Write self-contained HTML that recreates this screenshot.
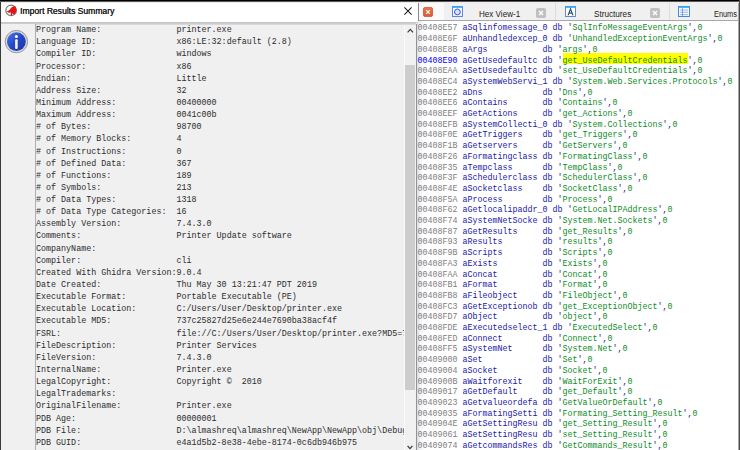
<!DOCTYPE html>
<html><head><meta charset="utf-8"><style>
*{margin:0;padding:0;box-sizing:border-box}
html,body{width:740px;height:450px;overflow:hidden;background:#fff}
body{position:relative;font-family:"Liberation Sans",sans-serif}
.a{position:absolute}
.lt{position:absolute;left:0;white-space:pre;font-family:"Liberation Mono",monospace;font-size:8.37px;line-height:12px;color:#2c2c2c;height:12px}
.rt{position:absolute;left:0;white-space:pre;font-family:"Liberation Mono",monospace;font-size:8.333px;line-height:11px;height:11px}
.ad{color:#808080}.lb{color:#2020a8}.st{color:#0c8c1e}.hl{background:#ffff00}
</style></head><body>

<div class="a" style="left:0;top:0;width:740px;height:1px;background:#000"></div>
<div class="a" style="left:0;top:2px;width:418px;height:448px;background:#f0f0f0"></div>
<div class="a" style="left:0;top:2px;width:1px;height:448px;background:#3a3a3a"></div>
<div class="a" style="left:1px;top:2px;width:417px;height:20px;background:#fff"></div>
<svg class="a" style="left:4px;top:4px" width="15" height="15" viewBox="0 0 15 15">
<circle cx="7.1" cy="6.4" r="5.3" fill="#fff" stroke="#7a7a7a" stroke-width="1.2"/>
<path d="M2.8 7.6 L5.2 6.2 L7.4 3.6 L9.6 2.2 L11.4 2.6 L12.3 5 L12.2 7.6 L11 9.8 L9.6 10.4 L8.6 9.2 L7.8 11.4 L6.6 11 L7 8.6 L4.6 8.8 Z" fill="#e41414"/>
</svg>
<div class="a" style="left:20px;top:3.5px;font-size:9px;color:#1a1a1a;text-shadow:0.25px 0 0 #1a1a1a;white-space:pre;line-height:14px;transform:scaleX(0.952);transform-origin:0 0">Import Results Summary</div>
<svg class="a" style="left:403.5px;top:6.5px" width="8" height="8" viewBox="0 0 8 8"><path d="M0.4 0.4 L7.6 7.6 M7.6 0.4 L0.4 7.6" stroke="#1e1e1e" stroke-width="1.05"/></svg>
<svg class="a" style="left:4px;top:29px" width="25" height="25" viewBox="0 0 25 25">
<defs><linearGradient id="ig" x1="0" y1="0" x2="1" y2="1"><stop offset="0" stop-color="#4f78e8"/><stop offset="0.5" stop-color="#2447c8"/><stop offset="1" stop-color="#1a35a8"/></linearGradient></defs>
<circle cx="12.4" cy="12.6" r="11.2" fill="#d8d8d8" stroke="#9a9a9a" stroke-width="1"/>
<circle cx="12.4" cy="12.6" r="9.4" fill="url(#ig)"/>
<circle cx="12.4" cy="7.4" r="1.5" fill="#fff"/>
<rect x="11.1" y="10.3" width="2.6" height="9.6" rx="1" fill="#f2f2f2"/>
</svg>
<div class="a" style="left:1px;top:22px;width:416px;height:1px;background:#c6c6c6"></div>
<div class="a" style="left:1px;top:23px;width:415px;height:1px;background:#cbccce"></div>
<div class="a" style="left:35px;top:24px;width:381px;height:1px;background:#d8d9dc"></div>
<div class="a" style="left:35px;top:24px;width:1px;height:426px;background:#adb0b4"></div>
<div class="a" style="left:36px;top:25px;width:368px;height:425px;overflow:hidden">
<div class="lt" style="top:-0.90px;left:0.00px">Program Name:               printer.exe</div>
<div class="lt" style="top:11.24px;left:0.00px">Language ID:                x86:LE:32:default (2.8)</div>
<div class="lt" style="top:23.38px;left:0.00px">Compiler ID:                windows</div>
<div class="lt" style="top:35.52px;left:0.00px">Processor:                  x86</div>
<div class="lt" style="top:47.66px;left:0.00px">Endian:                     Little</div>
<div class="lt" style="top:59.80px;left:0.00px">Address Size:               32</div>
<div class="lt" style="top:71.94px;left:0.00px">Minimum Address:            00400000</div>
<div class="lt" style="top:84.08px;left:0.00px">Maximum Address:            0041c00b</div>
<div class="lt" style="top:96.22px;left:0.00px"># of Bytes:                 98700</div>
<div class="lt" style="top:108.36px;left:0.00px"># of Memory Blocks:         4</div>
<div class="lt" style="top:120.50px;left:0.00px"># of Instructions:          0</div>
<div class="lt" style="top:132.64px;left:0.00px"># of Defined Data:          367</div>
<div class="lt" style="top:144.78px;left:0.00px"># of Functions:             189</div>
<div class="lt" style="top:156.92px;left:0.00px"># of Symbols:               213</div>
<div class="lt" style="top:169.06px;left:0.00px"># of Data Types:            1318</div>
<div class="lt" style="top:181.20px;left:0.00px"># of Data Type Categories:  16</div>
<div class="lt" style="top:193.34px;left:0.00px">Assembly Version:           7.4.3.0</div>
<div class="lt" style="top:205.48px;left:0.00px">Comments:                   Printer Update software</div>
<div class="lt" style="top:217.62px;left:0.00px">CompanyName:                </div>
<div class="lt" style="top:229.76px;left:0.00px">Compiler:                   cli</div>
<div class="lt" style="top:241.90px;left:0.00px">Created With Ghidra Version:9.0.4</div>
<div class="lt" style="top:254.04px;left:0.00px">Date Created:               Thu May 30 13:21:47 PDT 2019</div>
<div class="lt" style="top:266.18px;left:0.00px">Executable Format:          Portable Executable (PE)</div>
<div class="lt" style="top:278.32px;left:0.00px">Executable Location:        C:/Users/User/Desktop/printer.exe</div>
<div class="lt" style="top:290.46px;left:0.00px">Executable MD5:             737c25827d25e6e244e7690ba38acf4f</div>
<div class="lt" style="top:302.60px;left:0.00px">FSRL:                       file://C:/Users/User/Desktop/printer.exe?MD5=737c25827d25e6e244e7690ba38acf4f</div>
<div class="lt" style="top:314.74px;left:0.00px">FileDescription:            Printer Services</div>
<div class="lt" style="top:326.88px;left:0.00px">FileVersion:                7.4.3.0</div>
<div class="lt" style="top:339.02px;left:0.00px">InternalName:               Printer.exe</div>
<div class="lt" style="top:351.16px;left:0.00px">LegalCopyright:             Copyright ©  2010</div>
<div class="lt" style="top:363.30px;left:0.00px">LegalTrademarks:            </div>
<div class="lt" style="top:375.44px;left:0.00px">OriginalFilename:           Printer.exe</div>
<div class="lt" style="top:387.58px;left:0.00px">PDB Age:                    00000001</div>
<div class="lt" style="top:399.72px;left:0.00px">PDB File:                   D:\almashreq\almashreq\NewApp\NewApp\obj\Debug\Printer.pdb</div>
<div class="lt" style="top:411.86px;left:0.00px">PDB GUID:                   e4a1d5b2-8e38-4ebe-8174-0c6db946b975</div>
</div>
<div class="a" style="left:405px;top:25px;width:11px;height:425px;background:#f1f1f1"></div>
<div class="a" style="left:404px;top:25px;width:1px;height:425px;background:#fafafa"></div>
<div class="a" style="left:405px;top:65px;width:10px;height:325px;background:#cdcdcd"></div>
<svg class="a" style="left:407px;top:28px" width="7" height="5" viewBox="0 0 7 5"><path d="M0.6 4.3 L3.3 1.4 L6 4.3" stroke="#3a3a3a" stroke-width="1.2" fill="none"/></svg>
<svg class="a" style="left:407px;top:445px" width="7" height="5" viewBox="0 0 7 5"><path d="M0.6 0.9 L3.0 3.6 L5.4 0.9" stroke="#3a3a3a" stroke-width="1.3" fill="none"/></svg>
<div class="a" style="left:416px;top:24px;width:1px;height:426px;background:#8a949e"></div>
<div class="a" style="left:417px;top:2px;width:323px;height:448px;background:#fff"></div>
<div class="a" style="left:418px;top:2px;width:322px;height:19px;background:#f0f0f0"></div>
<div class="a" style="left:418px;top:3px;width:26px;height:17px;background:#fafafa"></div>
<div class="a" style="left:418px;top:2px;width:321px;height:1px;background:#e4e4e4"></div>
<div class="a" style="left:418px;top:20px;width:320px;height:1px;background:#a8a8a8"></div>
<div class="a" style="left:418px;top:2px;width:1px;height:19px;background:#8a8a8a"></div>
<div class="a" style="left:417px;top:21px;width:8px;height:429px;background:linear-gradient(90deg,#dcdcdc,#f4f4f4 40%,#fff)"></div>
<div class="a" style="left:738px;top:2px;width:1px;height:448px;background:#a8a8a8"></div>
<div class="a" style="left:739px;top:0;width:1px;height:450px;background:#4a4a4a"></div>
<svg class="a" style="left:423px;top:7px" width="10" height="10" viewBox="0 0 10 10"><defs><linearGradient id="og" x1="0" y1="0" x2="0" y2="1"><stop offset="0" stop-color="#e8784e"/><stop offset="1" stop-color="#dc5a34"/></linearGradient></defs><rect x="0.4" y="0.4" width="9.2" height="9.2" rx="1.8" fill="url(#og)" stroke="#d44a2a" stroke-width="0.8"/><path d="M3.2 3.2 L6.8 6.8 M6.8 3.2 L3.2 6.8" stroke="#fff" stroke-width="1.2"/></svg>
<svg class="a" style="left:452px;top:6px" width="11" height="11" viewBox="0 0 11 11"><defs><linearGradient id="hg" x1="0" y1="0" x2="0" y2="1"><stop offset="0" stop-color="#fff"/><stop offset="1" stop-color="#e8f0ff"/></linearGradient></defs><rect x="0.5" y="0.5" width="10" height="10" fill="url(#hg)" stroke="#4a7ee0" stroke-width="0.9"/><rect x="0.5" y="0.4" width="10" height="1.5" fill="#38b0f0"/><circle cx="5.4" cy="5.9" r="2.9" fill="#d8e4ff" stroke="#3a50f0" stroke-width="1"/></svg>
<div class="a" style="left:479px;top:7px;font-size:8.4px;color:#1a1a1a;white-space:pre;line-height:14px;transform:scaleX(0.965);transform-origin:0 0">Hex View-1</div>
<svg class="a" style="left:536px;top:8px" width="10" height="10" viewBox="0 0 10 10"><rect x="0" y="0" width="10" height="10" rx="1.8" fill="#c0c0c0"/><path d="M3 3 L7 7 M7 3 L3 7" stroke="#fff" stroke-width="1.4"/></svg>
<div class="a" style="left:555px;top:3px;width:1px;height:17px;background:#dcdcdc"></div>
<svg class="a" style="left:565px;top:6px" width="11" height="11" viewBox="0 0 11 11"><rect x="0.5" y="0.5" width="10" height="10" fill="#fff" stroke="#4a7ee0" stroke-width="0.9"/><rect x="0.5" y="0.4" width="10" height="1.5" fill="#38b0f0"/><path d="M3 9.4 L5.5 3 L8 9.4 M3.9 7.2 L7.1 7.2" fill="none" stroke="#30507a" stroke-width="1.2"/></svg>
<div class="a" style="left:594px;top:7px;font-size:8.4px;color:#1a1a1a;white-space:pre;line-height:14px;transform:scaleX(0.975);transform-origin:0 0">Structures</div>
<svg class="a" style="left:650px;top:8px" width="10" height="10" viewBox="0 0 10 10"><rect x="0" y="0" width="10" height="10" rx="1.8" fill="#c0c0c0"/><path d="M3 3 L7 7 M7 3 L3 7" stroke="#fff" stroke-width="1.4"/></svg>
<div class="a" style="left:669px;top:3px;width:1px;height:17px;background:#dcdcdc"></div>
<svg class="a" style="left:678px;top:6px" width="12" height="11" viewBox="0 0 12 11"><rect x="0.5" y="0.5" width="11" height="10" fill="#f4faff" stroke="#3a78e0" stroke-width="0.9"/><rect x="0.5" y="0.4" width="11" height="1.5" fill="#38b0f0"/><path d="M2 4 L10 4 M2 6.3 L10 6.3 M2 8.6 L10 8.6" stroke="#7aa8f0" stroke-width="0.8"/><path d="M4.5 2.5 L4.5 10" stroke="#2a5ad0" stroke-width="1" stroke-dasharray="1 1"/></svg>
<div class="a" style="left:714px;top:7px;font-size:8.4px;color:#1a1a1a;white-space:pre;line-height:14px;transform:scaleX(0.88);transform-origin:0 0">Enums</div>
<div class="a" style="left:562.7px;top:53.4px;width:125.3px;height:10.7px;background:#ffff00"></div>
<div class="a" style="left:417px;top:21px;width:321px;height:429px;overflow:hidden">
<div class="rt" style="top:2.40px;left:0.60px"><span class="ad">00408E57</span> <span class="lb">aSqlinfomessage_0 db '</span><span class="st">SqlInfoMessageEventArgs</span><span class="lb">',</span><span class="st">0</span></div>
<div class="rt" style="top:13.10px;left:0.60px"><span class="ad">00408E6F</span> <span class="lb">aUnhandledexcep_0 db '</span><span class="st">UnhandledExceptionEventArgs</span><span class="lb">',</span><span class="st">0</span></div>
<div class="rt" style="top:23.80px;left:0.60px"><span class="ad">00408E8B</span> <span class="lb">aArgs           db '</span><span class="st">args</span><span class="lb">',</span><span class="st">0</span></div>
<div class="rt" style="top:34.50px;left:0.60px"><span class="ad" style="color:#0000ff">00408E90</span> <span class="lb">aGetUsedefaultc db '</span><span class="st">get_UseDefaultCredentials</span><span class="lb">',</span><span class="st">0</span></div>
<div class="rt" style="top:45.20px;left:0.60px"><span class="ad">00408EAA</span> <span class="lb">aSetUsedefaultc db '</span><span class="st">set_UseDefaultCredentials</span><span class="lb">',</span><span class="st">0</span></div>
<div class="rt" style="top:55.90px;left:0.60px"><span class="ad">00408EC4</span> <span class="lb">aSystemWebServi_1 db '</span><span class="st">System.Web.Services.Protocols</span><span class="lb">',</span><span class="st">0</span></div>
<div class="rt" style="top:66.60px;left:0.60px"><span class="ad">00408EE2</span> <span class="lb">aDns            db '</span><span class="st">Dns</span><span class="lb">',</span><span class="st">0</span></div>
<div class="rt" style="top:77.30px;left:0.60px"><span class="ad">00408EE6</span> <span class="lb">aContains       db '</span><span class="st">Contains</span><span class="lb">',</span><span class="st">0</span></div>
<div class="rt" style="top:88.00px;left:0.60px"><span class="ad">00408EEF</span> <span class="lb">aGetActions     db '</span><span class="st">get_Actions</span><span class="lb">',</span><span class="st">0</span></div>
<div class="rt" style="top:98.70px;left:0.60px"><span class="ad">00408EFB</span> <span class="lb">aSystemCollecti_0 db '</span><span class="st">System.Collections</span><span class="lb">',</span><span class="st">0</span></div>
<div class="rt" style="top:109.40px;left:0.60px"><span class="ad">00408F0E</span> <span class="lb">aGetTriggers    db '</span><span class="st">get_Triggers</span><span class="lb">',</span><span class="st">0</span></div>
<div class="rt" style="top:120.10px;left:0.60px"><span class="ad">00408F1B</span> <span class="lb">aGetservers     db '</span><span class="st">GetServers</span><span class="lb">',</span><span class="st">0</span></div>
<div class="rt" style="top:130.80px;left:0.60px"><span class="ad">00408F26</span> <span class="lb">aFormatingclass db '</span><span class="st">FormatingClass</span><span class="lb">',</span><span class="st">0</span></div>
<div class="rt" style="top:141.50px;left:0.60px"><span class="ad">00408F35</span> <span class="lb">aTempclass      db '</span><span class="st">TempClass</span><span class="lb">',</span><span class="st">0</span></div>
<div class="rt" style="top:152.20px;left:0.60px"><span class="ad">00408F3F</span> <span class="lb">aSchedulerclass db '</span><span class="st">SchedulerClass</span><span class="lb">',</span><span class="st">0</span></div>
<div class="rt" style="top:162.90px;left:0.60px"><span class="ad">00408F4E</span> <span class="lb">aSocketclass    db '</span><span class="st">SocketClass</span><span class="lb">',</span><span class="st">0</span></div>
<div class="rt" style="top:173.60px;left:0.60px"><span class="ad">00408F5A</span> <span class="lb">aProcess        db '</span><span class="st">Process</span><span class="lb">',</span><span class="st">0</span></div>
<div class="rt" style="top:184.30px;left:0.60px"><span class="ad">00408F62</span> <span class="lb">aGetlocalipaddr_0 db '</span><span class="st">GetLocalIPAddress</span><span class="lb">',</span><span class="st">0</span></div>
<div class="rt" style="top:195.00px;left:0.60px"><span class="ad">00408F74</span> <span class="lb">aSystemNetSocke db '</span><span class="st">System.Net.Sockets</span><span class="lb">',</span><span class="st">0</span></div>
<div class="rt" style="top:205.70px;left:0.60px"><span class="ad">00408F87</span> <span class="lb">aGetResults     db '</span><span class="st">get_Results</span><span class="lb">',</span><span class="st">0</span></div>
<div class="rt" style="top:216.40px;left:0.60px"><span class="ad">00408F93</span> <span class="lb">aResults        db '</span><span class="st">results</span><span class="lb">',</span><span class="st">0</span></div>
<div class="rt" style="top:227.10px;left:0.60px"><span class="ad">00408F9B</span> <span class="lb">aScripts        db '</span><span class="st">Scripts</span><span class="lb">',</span><span class="st">0</span></div>
<div class="rt" style="top:237.80px;left:0.60px"><span class="ad">00408FA3</span> <span class="lb">aExists         db '</span><span class="st">Exists</span><span class="lb">',</span><span class="st">0</span></div>
<div class="rt" style="top:248.50px;left:0.60px"><span class="ad">00408FAA</span> <span class="lb">aConcat         db '</span><span class="st">Concat</span><span class="lb">',</span><span class="st">0</span></div>
<div class="rt" style="top:259.20px;left:0.60px"><span class="ad">00408FB1</span> <span class="lb">aFormat         db '</span><span class="st">Format</span><span class="lb">',</span><span class="st">0</span></div>
<div class="rt" style="top:269.90px;left:0.60px"><span class="ad">00408FB8</span> <span class="lb">aFileobject     db '</span><span class="st">FileObject</span><span class="lb">',</span><span class="st">0</span></div>
<div class="rt" style="top:280.60px;left:0.60px"><span class="ad">00408FC3</span> <span class="lb">aGetExceptionob db '</span><span class="st">get_ExceptionObject</span><span class="lb">',</span><span class="st">0</span></div>
<div class="rt" style="top:291.30px;left:0.60px"><span class="ad">00408FD7</span> <span class="lb">aObject         db '</span><span class="st">object</span><span class="lb">',</span><span class="st">0</span></div>
<div class="rt" style="top:302.00px;left:0.60px"><span class="ad">00408FDE</span> <span class="lb">aExecutedselect_1 db '</span><span class="st">ExecutedSelect</span><span class="lb">',</span><span class="st">0</span></div>
<div class="rt" style="top:312.70px;left:0.60px"><span class="ad">00408FED</span> <span class="lb">aConnect        db '</span><span class="st">Connect</span><span class="lb">',</span><span class="st">0</span></div>
<div class="rt" style="top:323.40px;left:0.60px"><span class="ad">00408FF5</span> <span class="lb">aSystemNet      db '</span><span class="st">System.Net</span><span class="lb">',</span><span class="st">0</span></div>
<div class="rt" style="top:334.10px;left:0.60px"><span class="ad">00409000</span> <span class="lb">aSet            db '</span><span class="st">Set</span><span class="lb">',</span><span class="st">0</span></div>
<div class="rt" style="top:344.80px;left:0.60px"><span class="ad">00409004</span> <span class="lb">aSocket         db '</span><span class="st">Socket</span><span class="lb">',</span><span class="st">0</span></div>
<div class="rt" style="top:355.50px;left:0.60px"><span class="ad">0040900B</span> <span class="lb">aWaitforexit    db '</span><span class="st">WaitForExit</span><span class="lb">',</span><span class="st">0</span></div>
<div class="rt" style="top:366.20px;left:0.60px"><span class="ad">00409017</span> <span class="lb">aGetDefault     db '</span><span class="st">get_Default</span><span class="lb">',</span><span class="st">0</span></div>
<div class="rt" style="top:376.90px;left:0.60px"><span class="ad">00409023</span> <span class="lb">aGetvalueordefa db '</span><span class="st">GetValueOrDefault</span><span class="lb">',</span><span class="st">0</span></div>
<div class="rt" style="top:387.60px;left:0.60px"><span class="ad">00409035</span> <span class="lb">aFormatingSetti db '</span><span class="st">Formating_Setting_Result</span><span class="lb">',</span><span class="st">0</span></div>
<div class="rt" style="top:398.30px;left:0.60px"><span class="ad">0040904E</span> <span class="lb">aGetSettingResu db '</span><span class="st">get_Setting_Result</span><span class="lb">',</span><span class="st">0</span></div>
<div class="rt" style="top:409.00px;left:0.60px"><span class="ad">00409061</span> <span class="lb">aSetSettingResu db '</span><span class="st">set_Setting_Result</span><span class="lb">',</span><span class="st">0</span></div>
<div class="rt" style="top:419.70px;left:0.60px"><span class="ad">00409074</span> <span class="lb">aGetcommandsRes db '</span><span class="st">GetCommands_Result</span><span class="lb">',</span><span class="st">0</span></div>
</div>
<div class="a" style="left:0;top:1px;width:739px;height:1px;background:#5a5a5a"></div>
<div class="a" style="left:1px;top:2px;width:738px;height:1px;background:#ececec"></div>
</body></html>
